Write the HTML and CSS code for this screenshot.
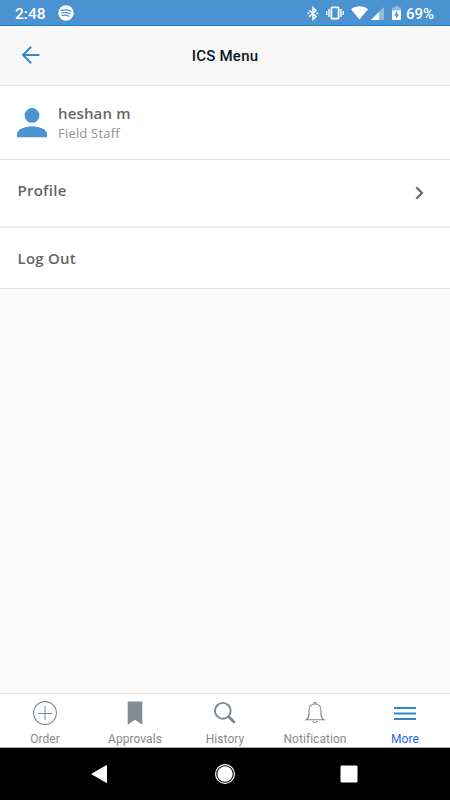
FILE: index.html
```html
<!DOCTYPE html>
<html lang="en">
<head>
    <meta charset="UTF-8">
    <meta name="viewport" content="width=device-width, initial-scale=1.0">
    <title>ICS Menu</title>
    <link rel="stylesheet" href="styles.css">
</head>
<body>
    <div class="status-bar">
        <span class="status-time">2:48</span>
        <svg class="status-music" width="16" height="16" viewBox="0 0 16 16">
            <circle cx="8" cy="8" r="7.7" fill="#fff"/>
            <path d="M3.2 5.4C6.5 4.4 10 4.7 13 6.2M3.6 8C6.5 7.2 9.5 7.5 12 8.8M4 10.4C6.4 9.8 8.8 10 11 11.3" fill="none" stroke="#4a92d0" stroke-width="1.2" stroke-linecap="round"/>
        </svg>
        <div class="status-icons">
            <svg width="12" height="15" viewBox="0 0 12 15">
                <path d="M2.2 4.2L9 10.5L6 13.3V1.7L9 4.5L2.2 10.8" fill="none" stroke="#fff" stroke-width="1.5"/>
                <path d="M.4 6.5h1.8v1.8H.4zM9.5 6.5h1.8v1.8H9.5z" fill="#fff"/>
            </svg>
            <svg class="icon-vibrate" width="18" height="14" viewBox="0 0 18 14">
                <rect x="5.4" y="1.3" width="7.2" height="11.4" rx="0.8" fill="none" stroke="#fff" stroke-width="1.8"/>
                <path d="M3 3v8M.7 5v4M15 3v8M17.3 5v4" stroke="#fff" stroke-width="1.4"/>
            </svg>
            <svg class="icon-wifi" width="17" height="14" viewBox="0 0 17 14">
                <path d="M0 3.2C5 -.6 12 -.6 17 3.2L8.5 13.6z" fill="#fff"/>
            </svg>
            <svg class="icon-signal" width="13" height="13" viewBox="0 0 13 13">
                <path d="M0 13L13 0V13z" fill="#fff" opacity=".4"/>
                <path d="M0 13L8 5V13z" fill="#fff"/>
            </svg>
            <svg class="icon-battery" width="9" height="14" viewBox="0 0 9 14">
                <path d="M0 1.5h2.6V0h3.8v1.5H9V5H0z" fill="#fff" opacity=".4"/>
                <path d="M0 4.6h9V13a1 1 0 0 1-1 1H1a1 1 0 0 1-1-1z" fill="#fff"/>
                <path d="M5.2 4.6L2.2 9.4H4.2V13L7 8.4H5.2z" fill="#4a92d0"/>
            </svg>
            <span class="status-percent">69%</span>
        </div>
    </div>

    <header class="header">
        <svg class="back-icon" width="20" height="20" viewBox="0 0 20 20">
            <path d="M18.4 10H2M10.2 1.8L2 10L10.2 18.2" fill="none" stroke="#3487cb" stroke-width="2"/>
        </svg>
        <h1>ICS Menu</h1>
    </header>

    <main class="content">
        <div class="user-row">
            <svg class="avatar" width="30" height="30" viewBox="0 0 30 30">
                <circle cx="15" cy="7.4" r="7.4" fill="#4a92d0"/>
                <path d="M0 29.2V25.8C0 21 9 18.2 15 18.2S30 21 30 25.8V29.2z" fill="#4a92d0"/>
            </svg>
            <div class="user-info">
                <div class="user-name">heshan m</div>
                <div class="user-role">Field Staff</div>
            </div>
        </div>
        <div class="menu-row profile-row">
            <span>Profile</span>
            <svg class="chevron" width="9" height="14" viewBox="0 0 9 14">
                <path d="M1.3 1.3L7 7L1.3 12.7" fill="none" stroke="#666" stroke-width="2.2"/>
            </svg>
        </div>
        <div class="menu-row logout-row">
            <span>Log Out</span>
        </div>
    </main>

    <nav class="tab-bar">
        <div class="tab">
            <svg width="26" height="26" viewBox="0 0 26 26" fill="none" stroke="#7d8790">
                <circle cx="13" cy="13" r="11.4" stroke-width="1.1"/>
                <path d="M6 13.5H20M13 6V20" stroke-width="1"/>
            </svg>
            <span>Order</span>
        </div>
        <div class="tab">
            <svg width="26" height="26" viewBox="0 0 26 26">
                <path d="M5.7 1.5H20.3V24.8L13 19.8L5.7 24.8z" fill="#838d95"/>
            </svg>
            <span>Approvals</span>
        </div>
        <div class="tab">
            <svg width="26" height="26" viewBox="0 0 26 26" fill="none" stroke="#7d8790">
                <circle cx="10.8" cy="10.8" r="7.9" stroke-width="1.9"/>
                <path d="M16.4 16.4L22.8 22.8" stroke-width="2.8"/>
            </svg>
            <span>History</span>
        </div>
        <div class="tab">
            <svg width="26" height="26" viewBox="0 0 26 26" fill="none" stroke="#7d8790" stroke-width="1.1">
                <path d="M4.2 19.7C6.5 18.2 7 16.8 7 14V10.5C7 6.6 9.2 4 13 4S19 6.6 19 10.5V14C19 16.8 19.5 18.2 21.8 19.7z"/>
                <path d="M11.7 4V3.6A1.3 1.3 0 0 1 14.3 3.6V4M10.7 20.8A2.4 2.4 0 0 0 15.3 20.8"/>
            </svg>
            <span>Notification</span>
        </div>
        <div class="tab active">
            <svg width="26" height="26" viewBox="0 0 26 26">
                <path d="M2 8H24M2 13.5H24M2 19H24" fill="none" stroke="#3087cb" stroke-width="1.8"/>
            </svg>
            <span>More</span>
        </div>
    </nav>

    <div class="system-nav">
        <svg width="18" height="20" viewBox="0 0 18 20">
            <path d="M.8 9.5Q.3 10 .8 10.5L15.2 18.8Q16 19.1 16 18.3V1.7Q16 .9 15.2 1.2z" fill="#fff"/>
        </svg>
        <svg width="20" height="20" viewBox="0 0 20 20">
            <circle cx="10" cy="10" r="9.4" fill="none" stroke="#fff" stroke-width="1.2"/>
            <circle cx="10" cy="10" r="7.7" fill="#fff"/>
        </svg>
        <svg width="18" height="18" viewBox="0 0 18 18">
            <rect x=".5" y=".5" width="17" height="17" rx="1.3" fill="#fff"/>
        </svg>
    </div>
</body>
</html>
```
FILE: styles.css
```css
* {
    box-sizing: border-box;
}
body {
    display: flex;
    flex-direction: column;
    height: 800px;
    margin: 0;
    background-color: #fafafa;
    font-family: Roboto, sans-serif;
    overflow: hidden;
}
svg {
    display: block;
    flex-shrink: 0;
}
.status-bar {
    display: flex;
    align-items: center;
    height: 26px;
    padding: 1px 16px 0 15px;
    background-color: #4a92d0;
    border-bottom: 1px solid #1581c8;
    color: white;
    font-size: 15.5px;
    font-weight: 500;
    line-height: 24px;
}
.status-time {
    width: 42.5px;
    padding-top: 2px;
}
.status-icons {
    display: flex;
    align-items: center;
    margin-left: auto;
}
.icon-vibrate {
    margin-left: 7px;
}
.icon-wifi {
    margin-left: 7px;
}
.icon-signal {
    margin-left: 3px;
}
.icon-battery {
    margin-left: 8px;
}
.status-percent {
    width: 28px;
    margin-left: 5px;
    padding-top: 2px;
    font-size: 15px;
}
.header {
    display: grid;
    grid-template-columns: 60px 1fr 60px;
    align-items: center;
    height: 60px;
    padding-bottom: 1px;
    background-color: #f7f7f7;
    border-bottom: 1px solid #e0e0e0;
}
.back-icon {
    margin-left: 21px;
}
.header h1 {
    margin: 0;
    padding-top: 1px;
    color: #0b1620;
    font-size: 15px;
    font-weight: 500;
    letter-spacing: 0.25px;
    text-align: center;
}
.content {
    flex: 1;
    font-family: "Open Sans", sans-serif;
}
.user-row {
    display: flex;
    align-items: center;
    height: 74px;
    padding: 0 17px;
    background-color: white;
    border-bottom: 1px solid #e0e0e0;
}
.user-info {
    margin-left: 11px;
    padding-top: 2px;
}
.user-name {
    color: #666;
    font-size: 15px;
    font-weight: 600;
    line-height: 19px;
    letter-spacing: 0.15px;
}
.user-role {
    color: #929292;
    font-size: 13px;
    line-height: 20px;
    letter-spacing: 0.2px;
}
.menu-row {
    display: flex;
    align-items: center;
    justify-content: space-between;
    padding: 0 26px 0 17.5px;
    background-color: white;
    color: #666;
    font-size: 15px;
    font-weight: 600;
    letter-spacing: 0.25px;
}
.profile-row {
    height: 68px;
    padding-bottom: 6px;
    border-bottom: 2px solid #ebebeb;
}
.chevron {
    margin-top: 5px;
}
.logout-row {
    height: 61px;
    border-bottom: 1px solid #e0e0e0;
}
.tab-bar {
    display: grid;
    grid-template-columns: repeat(5, 1fr);
    height: 55px;
    background-color: white;
    border-top: 1px solid #e2e2e2;
    border-bottom: 1px solid #aaa;
}
.tab {
    display: flex;
    flex-direction: column;
    align-items: center;
    padding-top: 6px;
    color: #8a8a8a;
    font-size: 12px;
}
.tab span {
    margin-top: 5px;
    line-height: 16px;
    letter-spacing: 0.05px;
}
.tab.active {
    color: #2468e8;
}
.system-nav {
    display: flex;
    align-items: center;
    justify-content: space-between;
    height: 52px;
    padding: 0 92px 0 91px;
    background-color: black;
}
```
